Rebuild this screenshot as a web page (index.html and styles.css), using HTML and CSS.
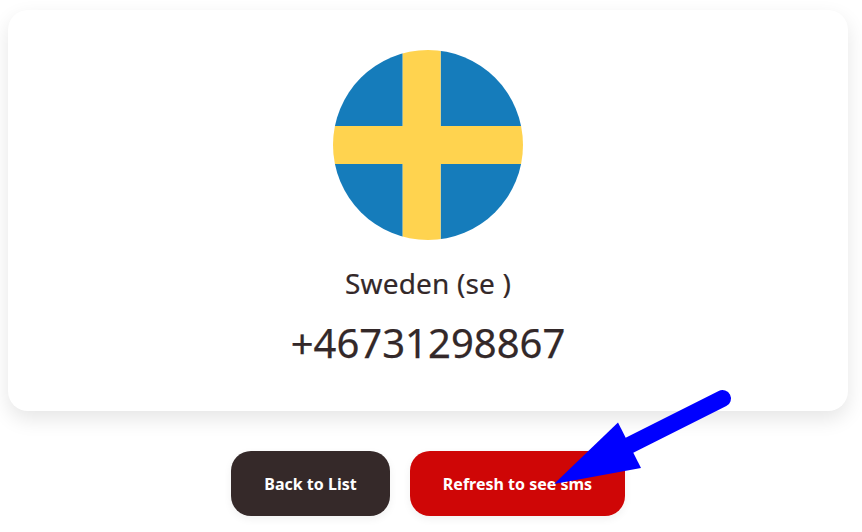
FILE: index.html
```html
<!DOCTYPE html>
<html lang="en">
<head>
<meta charset="utf-8">
<title>Sweden number</title>
<link rel="stylesheet" href="styles.css">
</head>
<body>
<main class="page">
  <section class="card">
    <svg class="flag" viewBox="0 0 190 190" aria-hidden="true">
      <clipPath id="round"><circle cx="95" cy="95" r="95"/></clipPath>
      <g clip-path="url(#round)">
        <path d="M0 0h69.7v76H0zM107.6 0H190v76h-82.400zM0 114h69.700v76H0zM107.600 114H190v76h-82.400z" fill="#157cbb"/>
        <path d="M69.700 0h37.900v76H190v38h-82.400v76H69.700v-76H0V76h69.700z" fill="#ffd34f"/>
      </g>
    </svg>
    <h2 class="country">Sweden (se )</h2>
    <h1 class="number">+46731298867</h1>
  </section>
  <nav class="actions">
    <a class="button button-dark">Back to List</a>
    <a class="button button-red">Refresh to see sms</a>
  </nav>
  <svg class="arrow" viewBox="0 0 862 532" aria-hidden="true">
    <path d="M722.500 398.500L620 450" stroke="#00f" stroke-width="17" stroke-linecap="round"/>
    <path d="M554 484L618 422.500L641 468z" fill="#00f"/>
  </svg>
</main>
</body>
</html>
```
FILE: styles.css
```css
* { box-sizing: border-box; }
body {
  margin: 0;
  background: #fff;
  color: #332829;
  font-family: "Noto Sans", sans-serif;
}
.page {
  position: relative;
  height: 532px;
  padding: 10px 14px 0 8px;
  overflow: hidden;
}
.card {
  display: flex;
  flex-direction: column;
  align-items: center;
  height: 401px;
  padding-top: 40px;
  border-radius: 20px;
  background: #fff;
  box-shadow: 0 8px 20px rgba(0, 0, 0, 0.1);
}
.flag {
  width: 190px;
  height: 190px;
}
.country {
  margin: 23px 0 0;
  font-size: 28px;
  font-weight: 400;
  line-height: 40px;
  letter-spacing: 0.17px;
  -webkit-text-stroke: 0.2px #332829;
}
.number {
  margin: 15px 0 0;
  font-size: 40px;
  font-weight: 400;
  line-height: 50px;
  -webkit-text-stroke: 0.25px #332829;
}
.actions {
  display: flex;
  justify-content: center;
  gap: 20px;
  padding-top: 40px;
}
.button {
  display: flex;
  align-items: center;
  justify-content: center;
  height: 65px;
  border-radius: 20px;
  color: #fff;
  font-size: 16px;
  font-weight: 700;
  white-space: nowrap;
  box-shadow: 0 3px 8px rgba(0, 0, 0, 0.06);
}
.button-dark {
  width: 159px;
  background: #352929;
}
.button-red {
  width: 215px;
  background: #cf0606;
}
.arrow {
  position: absolute;
  inset: 0;
  width: 862px;
  height: 532px;
}
```
